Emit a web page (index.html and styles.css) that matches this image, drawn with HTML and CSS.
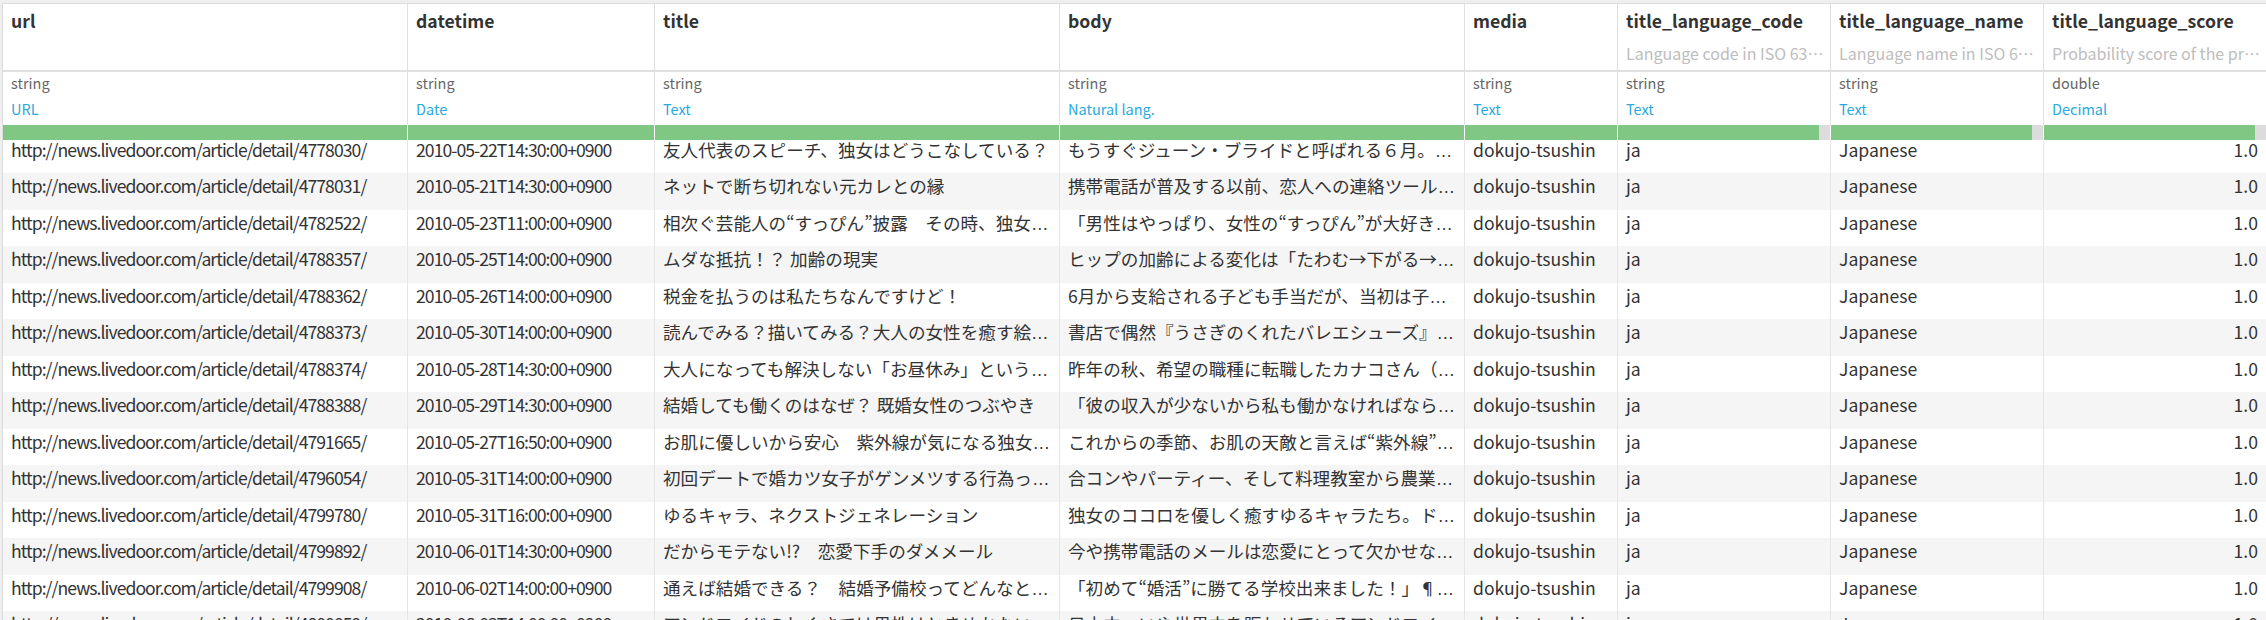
FILE: index.html
```html
<!DOCTYPE html>
<html lang="ja">
<head>
<meta charset="utf-8">
<title>dataset viewer</title>
<link rel="stylesheet" href="styles.css">
</head>
<body>
<div class="table">
  <div class="row names">
    <div class="cell"><div class="name">url</div></div>
    <div class="cell"><div class="name">datetime</div></div>
    <div class="cell"><div class="name">title</div></div>
    <div class="cell"><div class="name">body</div></div>
    <div class="cell"><div class="name">media</div></div>
    <div class="cell"><div class="name">title_language_code</div><div class="desc">Language code in ISO 63⋯</div></div>
    <div class="cell"><div class="name">title_language_name</div><div class="desc">Language name in ISO 6⋯</div></div>
    <div class="cell"><div class="name">title_language_score</div><div class="desc">Probability score of the pr⋯</div></div>
  </div>
  <div class="row types">
    <div class="cell"><div class="dtype">string</div><div class="sem">URL</div></div>
    <div class="cell"><div class="dtype">string</div><div class="sem">Date</div></div>
    <div class="cell"><div class="dtype">string</div><div class="sem">Text</div></div>
    <div class="cell"><div class="dtype">string</div><div class="sem">Natural lang.</div></div>
    <div class="cell"><div class="dtype">string</div><div class="sem">Text</div></div>
    <div class="cell"><div class="dtype">string</div><div class="sem">Text</div></div>
    <div class="cell"><div class="dtype">string</div><div class="sem">Text</div></div>
    <div class="cell"><div class="dtype">double</div><div class="sem">Decimal</div></div>
  </div>
  <div class="row quality">
    <div class="cell"><span class="ok"></span></div>
    <div class="cell"><span class="ok"></span></div>
    <div class="cell"><span class="ok"></span></div>
    <div class="cell"><span class="ok"></span></div>
    <div class="cell"><span class="ok"></span></div>
    <div class="cell"><span class="ok"></span><span class="miss"></span></div>
    <div class="cell"><span class="ok"></span><span class="miss"></span></div>
    <div class="cell"><span class="ok"></span><span class="miss"></span></div>
  </div>
  <div class="rows">
    <div class="row data">
      <div class="cell url">http://news.livedoor.com/article/detail/4778030/</div>
      <div class="cell date">2010-05-22T14:30:00+0900</div>
      <div class="cell">友人代表のスピーチ、独女はどうこなしている？</div>
      <div class="cell">もうすぐジューン・ブライドと呼ばれる６月。<span class="ell">…</span></div>
      <div class="cell">dokujo-tsushin</div>
      <div class="cell">ja</div>
      <div class="cell">Japanese</div>
      <div class="cell num">1.0</div>
    </div>
    <div class="row data">
      <div class="cell url">http://news.livedoor.com/article/detail/4778031/</div>
      <div class="cell date">2010-05-21T14:30:00+0900</div>
      <div class="cell">ネットで断ち切れない元カレとの縁</div>
      <div class="cell">携帯電話が普及する以前、恋人への連絡ツール<span class="ell">…</span></div>
      <div class="cell">dokujo-tsushin</div>
      <div class="cell">ja</div>
      <div class="cell">Japanese</div>
      <div class="cell num">1.0</div>
    </div>
    <div class="row data">
      <div class="cell url">http://news.livedoor.com/article/detail/4782522/</div>
      <div class="cell date">2010-05-23T11:00:00+0900</div>
      <div class="cell">相次ぐ芸能人の“すっぴん”披露　その時、独女<span class="ell">…</span></div>
      <div class="cell">「男性はやっぱり、女性の“すっぴん”が大好き<span class="ell">…</span></div>
      <div class="cell">dokujo-tsushin</div>
      <div class="cell">ja</div>
      <div class="cell">Japanese</div>
      <div class="cell num">1.0</div>
    </div>
    <div class="row data">
      <div class="cell url">http://news.livedoor.com/article/detail/4788357/</div>
      <div class="cell date">2010-05-25T14:00:00+0900</div>
      <div class="cell">ムダな抵抗！？ 加齢の現実</div>
      <div class="cell">ヒップの加齢による変化は「たわむ→下がる→<span class="ell">…</span></div>
      <div class="cell">dokujo-tsushin</div>
      <div class="cell">ja</div>
      <div class="cell">Japanese</div>
      <div class="cell num">1.0</div>
    </div>
    <div class="row data">
      <div class="cell url">http://news.livedoor.com/article/detail/4788362/</div>
      <div class="cell date">2010-05-26T14:00:00+0900</div>
      <div class="cell">税金を払うのは私たちなんですけど！</div>
      <div class="cell">6月から支給される子ども手当だが、当初は子<span class="ell">…</span></div>
      <div class="cell">dokujo-tsushin</div>
      <div class="cell">ja</div>
      <div class="cell">Japanese</div>
      <div class="cell num">1.0</div>
    </div>
    <div class="row data">
      <div class="cell url">http://news.livedoor.com/article/detail/4788373/</div>
      <div class="cell date">2010-05-30T14:00:00+0900</div>
      <div class="cell">読んでみる？描いてみる？大人の女性を癒す絵<span class="ell">…</span></div>
      <div class="cell">書店で偶然『うさぎのくれたバレエシューズ』<span class="ell">…</span></div>
      <div class="cell">dokujo-tsushin</div>
      <div class="cell">ja</div>
      <div class="cell">Japanese</div>
      <div class="cell num">1.0</div>
    </div>
    <div class="row data">
      <div class="cell url">http://news.livedoor.com/article/detail/4788374/</div>
      <div class="cell date">2010-05-28T14:30:00+0900</div>
      <div class="cell">大人になっても解決しない「お昼休み」という<span class="ell">…</span></div>
      <div class="cell">昨年の秋、希望の職種に転職したカナコさん（<span class="ell">…</span></div>
      <div class="cell">dokujo-tsushin</div>
      <div class="cell">ja</div>
      <div class="cell">Japanese</div>
      <div class="cell num">1.0</div>
    </div>
    <div class="row data">
      <div class="cell url">http://news.livedoor.com/article/detail/4788388/</div>
      <div class="cell date">2010-05-29T14:30:00+0900</div>
      <div class="cell">結婚しても働くのはなぜ？ 既婚女性のつぶやき</div>
      <div class="cell">「彼の収入が少ないから私も働かなければなら<span class="ell">…</span></div>
      <div class="cell">dokujo-tsushin</div>
      <div class="cell">ja</div>
      <div class="cell">Japanese</div>
      <div class="cell num">1.0</div>
    </div>
    <div class="row data">
      <div class="cell url">http://news.livedoor.com/article/detail/4791665/</div>
      <div class="cell date">2010-05-27T16:50:00+0900</div>
      <div class="cell">お肌に優しいから安心　紫外線が気になる独女<span class="ell">…</span></div>
      <div class="cell">これからの季節、お肌の天敵と言えば“紫外線”<span class="ell">…</span></div>
      <div class="cell">dokujo-tsushin</div>
      <div class="cell">ja</div>
      <div class="cell">Japanese</div>
      <div class="cell num">1.0</div>
    </div>
    <div class="row data">
      <div class="cell url">http://news.livedoor.com/article/detail/4796054/</div>
      <div class="cell date">2010-05-31T14:00:00+0900</div>
      <div class="cell">初回デートで婚カツ女子がゲンメツする行為っ<span class="ell">…</span></div>
      <div class="cell">合コンやパーティー、そして料理教室から農業<span class="ell">…</span></div>
      <div class="cell">dokujo-tsushin</div>
      <div class="cell">ja</div>
      <div class="cell">Japanese</div>
      <div class="cell num">1.0</div>
    </div>
    <div class="row data">
      <div class="cell url">http://news.livedoor.com/article/detail/4799780/</div>
      <div class="cell date">2010-05-31T16:00:00+0900</div>
      <div class="cell">ゆるキャラ、ネクストジェネレーション</div>
      <div class="cell">独女のココロを優しく癒すゆるキャラたち。ド<span class="ell">…</span></div>
      <div class="cell">dokujo-tsushin</div>
      <div class="cell">ja</div>
      <div class="cell">Japanese</div>
      <div class="cell num">1.0</div>
    </div>
    <div class="row data">
      <div class="cell url">http://news.livedoor.com/article/detail/4799892/</div>
      <div class="cell date">2010-06-01T14:30:00+0900</div>
      <div class="cell">だからモテない!?　恋愛下手のダメメール</div>
      <div class="cell">今や携帯電話のメールは恋愛にとって欠かせな<span class="ell">…</span></div>
      <div class="cell">dokujo-tsushin</div>
      <div class="cell">ja</div>
      <div class="cell">Japanese</div>
      <div class="cell num">1.0</div>
    </div>
    <div class="row data">
      <div class="cell url">http://news.livedoor.com/article/detail/4799908/</div>
      <div class="cell date">2010-06-02T14:00:00+0900</div>
      <div class="cell">通えば結婚できる？　結婚予備校ってどんなと<span class="ell">…</span></div>
      <div class="cell">「初めて“婚活”に勝てる学校出来ました！」¶<span class="ell">…</span></div>
      <div class="cell">dokujo-tsushin</div>
      <div class="cell">ja</div>
      <div class="cell">Japanese</div>
      <div class="cell num">1.0</div>
    </div>
    <div class="row data">
      <div class="cell url">http://news.livedoor.com/article/detail/4800059/</div>
      <div class="cell date">2010-06-03T14:00:00+0900</div>
      <div class="cell">アンドロイドのしぐさでは男性はときめかない<span class="ell">…</span></div>
      <div class="cell">日本中、いや世界中を賑わせているアンドロイ<span class="ell">…</span></div>
      <div class="cell">dokujo-tsushin</div>
      <div class="cell">ja</div>
      <div class="cell">Japanese</div>
      <div class="cell num">1.0</div>
    </div>
  </div>
</div>
</body>
</html>
```

FILE: styles.css
```css
html, body {
  margin: 0;
  padding: 0;
}
body {
  background: #efefef;
  font-family: "Noto Sans CJK JP", "Noto Sans", sans-serif;
  color: #333;
  overflow: hidden;
  height: 620px;
}
.table {
  --cols: 405px 247px 405px 405px 153px 213px 213px 222px;
  margin: 3px 0 0 2px;
  background: #fff;
  border-top: 1px solid #dcdcdc;
  border-left: 1px solid #dcdcdc;
  height: 616px;
  overflow: hidden;
}
.row {
  display: grid;
  grid-template-columns: var(--cols);
}
.cell {
  box-sizing: border-box;
  border-right: 1px solid #e0e0e0;
  padding: 0 8px;
  white-space: nowrap;
  overflow: hidden;
  min-width: 0;
}
.cell:last-child {
  border-right: none;
}
.names {
  height: 66px;
  border-bottom: 2px solid #e0e0e0;
}
.names .cell {
  padding-top: 1px;
}
.name {
  font-size: 17.6px;
  font-weight: 700;
  line-height: 32px;
  color: #333;
}
.desc {
  font-size: 16px;
  line-height: 32px;
  color: #bdbdbd;
}
.types {
  height: 53px;
}
.dtype {
  font-size: 14.5px;
  line-height: 22px;
  color: #666;
}
.sem {
  font-size: 14.5px;
  line-height: 22px;
  margin-top: 4px;
  color: #29a9df;
}
.quality {
  height: 15px;
}
.quality .cell {
  padding: 0;
  display: flex;
  border-right: 1px solid #fff;
}
.quality .cell:last-child {
  border-right: none;
}
.ok {
  flex: 1;
  background: #81c784;
}
.miss {
  width: 11px;
  background: #dcdcdc;
}
.rows {
  height: 482px;
  overflow: hidden;
}
.data {
  height: 36.5px;
}
.data:nth-child(even) {
  background: #f5f5f5;
}
.data .cell {
  font-size: 17.6px;
  line-height: 26px;
  border-right-color: #e6e6e6;
  color: #333;
}
/* the list is scrolled a few pixels under the header */
.data:first-child {
  height: 33px;
}
.data:first-child .cell {
  line-height: 19px;
}
.data .url,
.data .date {
  letter-spacing: -0.95px;
}
.data .num {
  text-align: right;
}
.ell {
  font-family: "Liberation Sans", sans-serif;
}
```
